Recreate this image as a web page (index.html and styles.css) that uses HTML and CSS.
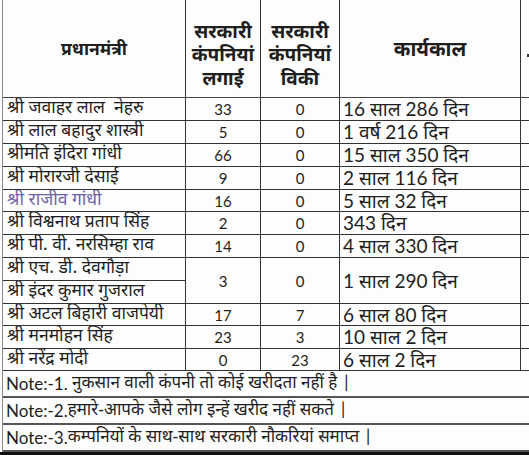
FILE: index.html
```html
<!DOCTYPE html>
<html lang="hi">
<head>
<meta charset="utf-8">
<title>प्रधानमंत्री और सरकारी कंपनियां</title>
<link rel="stylesheet" href="styles.css">
</head>
<body>
<div class="page">
  <div class="sheet">
    <div class="cell head h-name">प्रधानमंत्री</div>
    <div class="cell head h-num"><span>सरकारी</span><span>कंपनियां</span><span>लगाई</span></div>
    <div class="cell head h-num"><span>सरकारी</span><span>कंपनियां</span><span>विकी</span></div>
    <div class="cell head h-term">कार्यकाल</div>
    <div class="cell head h-extra"><span class="dot"></span></div>

    <div class="cell name">श्री जवाहर लाल&nbsp; नेहरु</div>
    <div class="cell num">33</div>
    <div class="cell num">0</div>
    <div class="cell term">16 साल 286 दिन</div>
    <div class="cell extra"></div>

    <div class="cell name">श्री लाल बहादुर शास्त्री</div>
    <div class="cell num">5</div>
    <div class="cell num">0</div>
    <div class="cell term">1 वर्ष 216 दिन</div>
    <div class="cell extra"></div>

    <div class="cell name">श्रीमति इंदिरा गांधी</div>
    <div class="cell num">66</div>
    <div class="cell num">0</div>
    <div class="cell term">15 साल 350 दिन</div>
    <div class="cell extra"></div>

    <div class="cell name">श्री मोरारजी देसाई</div>
    <div class="cell num">9</div>
    <div class="cell num">0</div>
    <div class="cell term">2 साल 116 दिन</div>
    <div class="cell extra"></div>

    <div class="cell name faded">श्री राजीव गांधी</div>
    <div class="cell num">16</div>
    <div class="cell num">0</div>
    <div class="cell term">5 साल 32 दिन</div>
    <div class="cell extra"></div>

    <div class="cell name">श्री विश्वनाथ प्रताप सिंह</div>
    <div class="cell num">2</div>
    <div class="cell num">0</div>
    <div class="cell term">343 दिन</div>
    <div class="cell extra"></div>

    <div class="cell name">श्री पी. वी. नरसिम्हा राव</div>
    <div class="cell num">14</div>
    <div class="cell num">0</div>
    <div class="cell term">4 साल 330 दिन</div>
    <div class="cell extra"></div>

    <div class="cell name">श्री एच. डी. देवगौड़ा</div>
    <div class="cell num span2">3</div>
    <div class="cell num span2">0</div>
    <div class="cell term span2">1 साल 290 दिन</div>
    <div class="cell extra span2"></div>
    <div class="cell name">श्री इंदर कुमार गुजराल</div>

    <div class="cell name">श्री अटल बिहारी वाजपेयी</div>
    <div class="cell num">17</div>
    <div class="cell num">7</div>
    <div class="cell term">6 साल 80 दिन</div>
    <div class="cell extra"></div>

    <div class="cell name">श्री मनमोहन सिंह</div>
    <div class="cell num">23</div>
    <div class="cell num">3</div>
    <div class="cell term">10 साल 2 दिन</div>
    <div class="cell extra"></div>

    <div class="cell name">श्री नरेंद्र मोदी</div>
    <div class="cell num">0</div>
    <div class="cell num">23</div>
    <div class="cell term">6 साल 2 दिन</div>
    <div class="cell extra"></div>

    <div class="cell note"><span class="lat">Note:-1.&nbsp;</span>नुकसान वाली कंपनी तो कोई खरीदता नहीं है |</div>
    <div class="cell note"><span class="lat">Note:-2.</span>हमारे-आपके जैसे लोग इन्हें खरीद नहीं सकते |</div>
    <div class="cell note"><span class="lat">Note:-3.</span>कम्पनियों के साथ-साथ सरकारी नौकरियां समाप्त |</div>
  </div>
</div>
</body>
</html>
```
FILE: styles.css
```css
html, body {
  margin: 0;
  padding: 0;
  overflow: hidden;
  background: #111;
}

.page {
  box-sizing: border-box;
  background: #fdfdfd;
  padding-left: 2px;
  width: 529px;
  overflow: hidden;
}

.sheet {
  display: grid;
  grid-template-columns: 183px 75px 79px 181px 1fr;
  grid-template-rows: 98px 23px 23px 23px 23px 22px 23px 23px 23px 23px 22px 23px 22px 27px 27px 27px;
  border-left: 1px solid #8a8a8a;
  font-family: "Noto Sans Devanagari", "Lohit Devanagari", "Noto Sans", sans-serif;
  color: #1e1e1e;
}

.cell {
  box-sizing: border-box;
  border-right: 1px solid #333;
  border-bottom: 1px solid #333;
  display: flex;
  align-items: center;
  overflow: hidden;
  white-space: nowrap;
  line-height: 20px;
}

.head {
  font-weight: 700;
  justify-content: center;
  border-bottom-color: #444;
}

.h-name {
  font-size: 17.5px;
  padding-top: 5px;
}

.h-num {
  flex-direction: column;
  justify-content: flex-end;
  font-size: 19px;
  line-height: 23.5px;
  padding-bottom: 5px;
}

.h-term {
  font-size: 20px;
  padding-top: 4px;
}

.h-extra {
  justify-content: flex-start;
  border-right: none;
}

.dot {
  width: 3px;
  height: 3px;
  background: #333;
  margin-left: 6px;
  margin-top: 14px;
}

.name {
  font-size: 17.5px;
  padding-left: 4px;
}

.faded {
  color: #6d62a6;
}

.num {
  justify-content: center;
  font-family: Lato, "Liberation Sans", sans-serif;
  font-size: 15px;
}

.term {
  font-family: Lato, "Noto Sans Devanagari", "Lohit Devanagari", sans-serif;
  font-size: 19px;
  padding-left: 3px;
}

.extra {
  border-right: none;
}

.span2 {
  grid-row: span 2;
}

.note {
  grid-column: 1 / -1;
  border-right: none;
  font-size: 17px;
  line-height: 24px;
  padding-left: 3px;
  border-bottom: 2px solid #555;
}

.lat {
  font-family: Lato, "Liberation Sans", sans-serif;
}
```
